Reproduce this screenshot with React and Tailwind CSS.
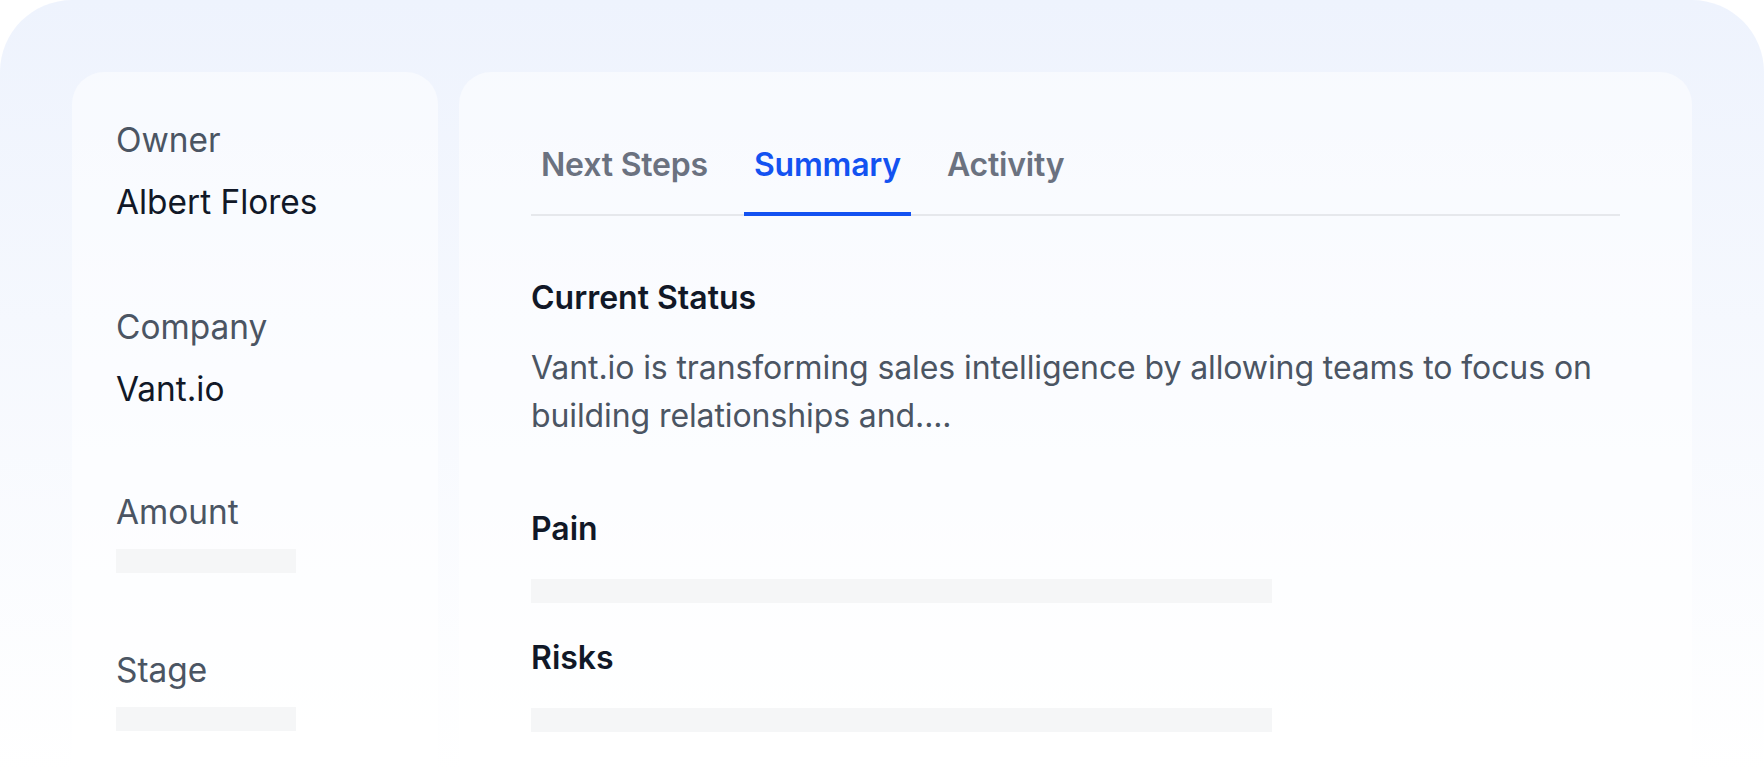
export default function App() {
  return (
    <div className="w-[1764px] h-[772px] overflow-hidden bg-white font-['Inter',sans-serif]">
      <div className="h-[772px] rounded-t-[72px] bg-gradient-to-b from-[#eef3fd] to-[#ffffff] px-[72px] pt-[72px] flex gap-[21px] overflow-hidden">
        {/* Left card */}
        <div className="w-[366px] shrink-0 h-[760px] rounded-[32px] bg-white/50 pl-[44px] pt-[44px]">
          <div className="text-[33.4px] leading-[48px] text-[#4b5563]">Owner</div>
          <div className="mt-[14px] text-[33.4px] leading-[48px] text-[#111827]">Albert Flores</div>

          <div className="mt-[77px] text-[33.4px] leading-[48px] text-[#4b5563]">Company</div>
          <div className="mt-[14px] text-[33.4px] leading-[48px] text-[#111827]">Vant.io</div>

          <div className="mt-[75px] text-[33.4px] leading-[48px] text-[#4b5563]">Amount</div>
          <div className="mt-[13px] h-[24px] w-[180px] bg-[#f5f6f7]"></div>

          <div className="mt-[73px] text-[33.4px] leading-[48px] text-[#4b5563]">Stage</div>
          <div className="mt-[13px] h-[24px] w-[180px] bg-[#f5f6f7]"></div>
        </div>

        {/* Right card */}
        <div className="flex-1 h-[760px] rounded-[32px] bg-white/50 px-[72px] pt-[69px]">
          <div className="flex gap-[26px] border-b-2 border-[#e6e8ec]">
            <div className="-mb-[2px] px-[10px] pb-[23px] border-b-4 border-transparent text-[32px] leading-[48px] font-semibold tracking-[-0.2px] text-[#6b7280]">
              Next Steps
            </div>
            <div className="-mb-[2px] px-[10px] pb-[23px] border-b-4 border-[#1352f1] text-[32px] leading-[48px] font-semibold tracking-[-0.2px] text-[#1352f1]">
              Summary
            </div>
            <div className="-mb-[2px] px-[10px] pb-[23px] border-b-4 border-transparent text-[32px] leading-[48px] font-semibold tracking-[-0.2px] text-[#6b7280]">
              Activity
            </div>
          </div>

          <div className="mt-[58px] text-[32px] leading-[48px] font-semibold text-[#111827]">Current Status</div>
          <p className="mt-[22px] text-[32px] leading-[48px] tracking-[-0.1px] text-[#4b5563]">
            Vant.io is transforming sales intelligence by allowing teams to focus on building relationships and....
          </p>

          <div className="mt-[65px] text-[32px] leading-[48px] font-semibold text-[#111827]">Pain</div>
          <div className="mt-[26px] h-[24px] w-[741px] bg-[#f5f6f7]"></div>

          <div className="mt-[31px] text-[32px] leading-[48px] font-semibold text-[#111827]">Risks</div>
          <div className="mt-[26px] h-[24px] w-[741px] bg-[#f5f6f7]"></div>
        </div>
      </div>
    </div>
  );
}
